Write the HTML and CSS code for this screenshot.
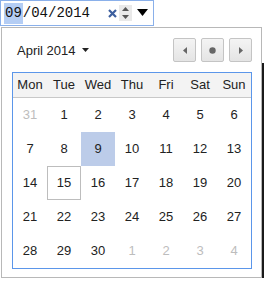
FILE: index.html
```html
<!DOCTYPE html>
<html lang="en">
<head>
    <meta charset="UTF-8">
    <meta name="viewport" content="width=device-width, initial-scale=1.0">
    <title>Date picker</title>

    <link rel="stylesheet" href="styles.css">
</head>
<body>

<div class="field">
    <span class="value"><span class="sel">09</span>/04/2014</span>
    <span class="clear">
        <svg width="9" height="9" viewBox="0 0 9 9"><path d="M1 1 L8 8 M8 1 L1 8" stroke="#3d5f9e" stroke-width="2.2"/></svg>
    </span>
    <span class="spin">
        <svg width="13" height="16" viewBox="0 0 13 16"><path d="M6.5 2 L10 6 L3 6 Z" fill="#555"/><path d="M3 10 L10 10 L6.5 14 Z" fill="#555"/></svg>
    </span>
    <span class="drop">
        <svg width="11" height="8" viewBox="0 0 11 8"><path d="M0 0 L11 0 L5.5 7 Z" fill="#000"/></svg>
    </span>
</div>

<div class="popup">
    <div class="top">
        <div class="month">April 2014
            <svg width="7" height="4" viewBox="0 0 7 4"><path d="M0 0 L7 0 L3.5 4 Z" fill="#222"/></svg>
        </div>
        <div class="nav">
            <button class="btn"><svg width="4" height="7" viewBox="0 0 4 7"><path d="M4 0 L4 7 L0 3.5 Z" fill="#666"/></svg></button>
            <button class="btn"><svg width="7" height="7" viewBox="0 0 7 7"><circle cx="3.5" cy="3.5" r="3.2" fill="#666"/></svg></button>
            <button class="btn"><svg width="4" height="7" viewBox="0 0 4 7"><path d="M0 0 L0 7 L4 3.5 Z" fill="#666"/></svg></button>
        </div>
    </div>

    <div class="cal">
        <div class="head">
            <span>Mon</span><span>Tue</span><span>Wed</span><span>Thu</span><span>Fri</span><span>Sat</span><span>Sun</span>
        </div>
        <div class="days">
            <span class="off">31</span><span>1</span><span>2</span><span>3</span><span>4</span><span>5</span><span>6</span>
            <span>7</span><span>8</span><span class="picked">9</span><span>10</span><span>11</span><span>12</span><span>13</span>
            <span>14</span><span class="today">15</span><span>16</span><span>17</span><span>18</span><span>19</span><span>20</span>
            <span>21</span><span>22</span><span>23</span><span>24</span><span>25</span><span>26</span><span>27</span>
            <span>28</span><span>29</span><span>30</span><span class="off">1</span><span class="off">2</span><span class="off">3</span><span class="off">4</span>
        </div>
    </div>
</div>

</body>
</html>
```

FILE: styles.css
```css
body {
    margin: 0;
    background-color: #fff;
    font-family: "Liberation Sans", Arial, sans-serif;
    color: #222;
}

.field {
    display: flex;
    align-items: center;
    box-sizing: border-box;
    width: 154px;
    height: 26px;
    border: 1px solid #8ab0ea;
    padding: 0 0 0 3px;
}

.value {
    font-family: "Liberation Mono", monospace;
    font-size: 14px;
    color: #111;
    width: 100px;
}

.sel {
    background-color: #b4cdf4;
    padding: 2px 1px 3px 1px;
}

.clear {
    display: flex;
    margin-left: 4px;
}

.spin {
    display: flex;
    margin-left: 2px;
    background-color: #e9e9e9;
}

.drop {
    display: flex;
    margin-left: 5px;
}

.popup {
    position: relative;
    box-sizing: border-box;
    width: 261px;
    margin: 1px 0 0 1px;
    border: 1px solid #b8b8b8;
    padding: 10px 9px 8px 10px;
    background-color: #fff;
}

/* drop shadow, right and bottom */
.popup::before {
    content: "";
    position: absolute;
    left: 260px;
    top: 35px;
    width: 2px;
    height: 216px;
    background-color: #1a1a1a;
}

.popup::after {
    content: "";
    position: absolute;
    left: 8px;
    top: 251px;
    width: 254px;
    height: 3px;
    background-color: #1a1a1a;
}

.top {
    display: flex;
    align-items: center;
    justify-content: space-between;
    height: 24px;
    margin-bottom: 10px;
}

.month {
    display: flex;
    align-items: center;
    gap: 6px;
    padding-left: 5px;
    font-size: 13px;
}

.nav {
    display: flex;
    gap: 5px;
}

.btn {
    display: flex;
    align-items: center;
    justify-content: center;
    box-sizing: border-box;
    width: 23px;
    height: 24px;
    padding: 0;
    border: 1px solid #c4c4c4;
    border-radius: 2px;
    background: linear-gradient(#f4f4f4, #e4e4e4);
}

.cal {
    border: 1px solid #5b96ea;
}

.head,
.days {
    display: grid;
    grid-template-columns: repeat(7, 34px);
    text-align: center;
    font-size: 13px;
}

.head {
    height: 24px;
    line-height: 24px;
    background-color: #f3f3f3;
    border-bottom: 1px solid #c8c8c8;
}

.days {
    grid-auto-rows: 34px;
}

.days span {
    line-height: 34px;
}

.off {
    color: #bdbdbd;
}

.picked {
    background-color: #bccce9;
}

.today {
    box-shadow: inset 0 0 0 1px #bdbdbd;
}
```
